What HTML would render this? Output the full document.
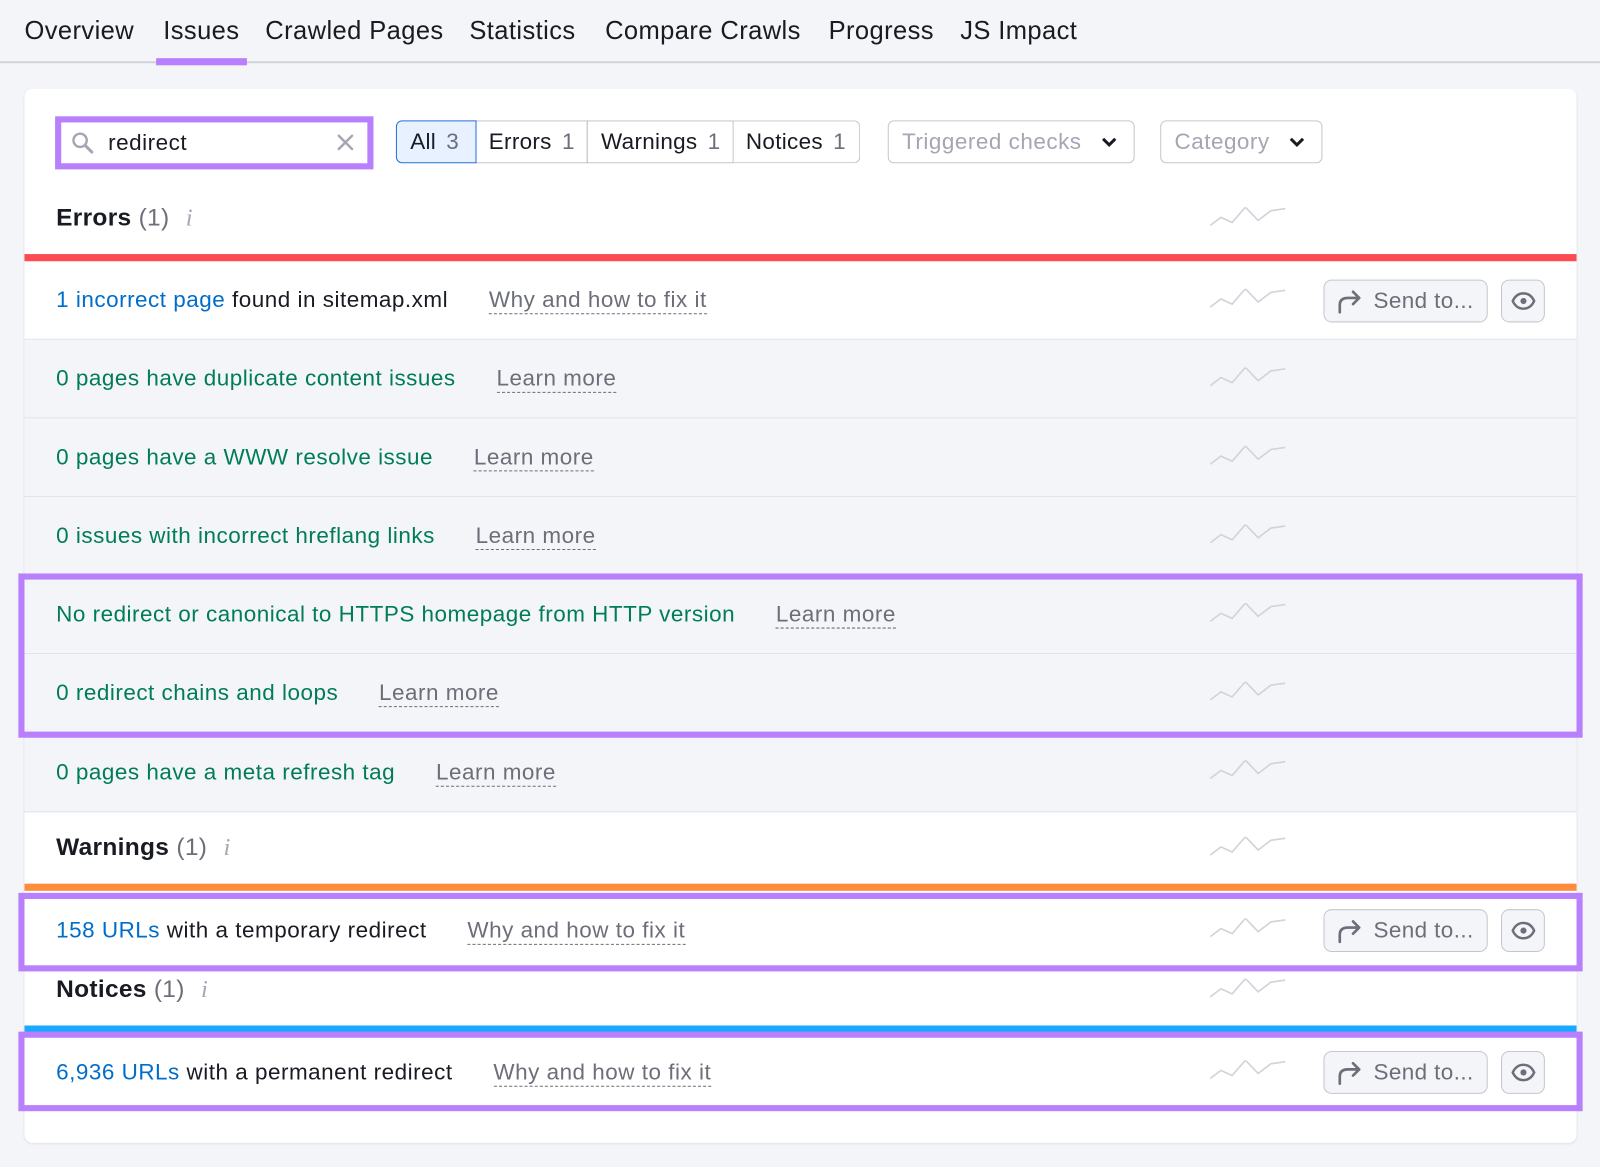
<!DOCTYPE html>
<html><head><meta charset="utf-8"><style>
*{box-sizing:border-box;margin:0;padding:0}
html,body{width:1600px;height:1167px;overflow:hidden;background:#f4f5f9;font-family:"Liberation Sans",sans-serif}
#w{position:absolute;left:0;top:0;width:1568px;height:1144px;transform:scale(1.0204);transform-origin:0 0}
.a{position:absolute}
.tab{position:absolute;top:16px;font-size:25px;letter-spacing:0.4px;color:#191b23;white-space:nowrap}
.row{position:absolute;left:24px;width:1521px;height:77px;border-bottom:1px solid #e0e1e9}
.g{background:#f4f5f9}
.t{position:absolute;left:31px;top:50%;transform:translateY(-50%);font-size:22px;letter-spacing:0.5px;white-space:nowrap;color:#191b23}
.gr{color:#007c58}
.bl{color:#006dca}
.lm{color:#6c6e79;border-bottom:1.5px dashed #6c6e79;margin-left:40px;padding-bottom:1px}
.hd{position:absolute;left:55px;font-size:24px;letter-spacing:0.3px;font-weight:bold;color:#191b23;white-space:nowrap}
.hd span{font-weight:normal;color:#6c6e79}
.hd i{font-family:"Liberation Serif",serif;color:#a4a6b3;margin-left:16px;font-weight:normal}
.sp{position:absolute;left:1186px}
.send{position:absolute;left:1273px;width:161px;height:42px;border:1px solid #c4c7cf;border-radius:8px;background:#f4f5f9;font-size:22px;letter-spacing:0.4px;color:#6c6e79;padding-left:48px;line-height:40px}
.send svg{position:absolute;left:12px;top:9px}
.eye{position:absolute;left:1447px;width:43px;height:42px;border:1px solid #c4c7cf;border-radius:8px;background:#f4f5f9}
.eye svg{position:absolute;left:9px;top:10px}
.hl{position:absolute;left:18px;width:1533px;border:6px solid #b880fc}
.seg{position:absolute;top:118px;height:42px;border:1px solid #c4c7cf;font-size:22px;letter-spacing:0.3px;color:#191b23;line-height:40px;padding-left:13px}
.seg b{font-weight:normal;color:#6c6e79;margin-left:10px}
.dd{position:absolute;top:118px;height:42px;border:1px solid #c4c7cf;border-radius:6px;background:#fff;font-size:22px;letter-spacing:0.5px;color:#a4a6b3;line-height:40px;padding-left:13px}
.dd svg{position:absolute;right:16px;top:15px}
</style></head><body><div id="w">
<div class="tab" style="left:24px">Overview</div>
<div class="tab" style="left:160px">Issues</div>
<div class="tab" style="left:260px">Crawled Pages</div>
<div class="tab" style="left:460px">Statistics</div>
<div class="tab" style="left:593px">Compare Crawls</div>
<div class="tab" style="left:812px">Progress</div>
<div class="tab" style="left:941px">JS Impact</div>
<div class="a" style="left:0;top:60px;width:1568px;height:2px;background:#d1d4db"></div>
<div class="a" style="left:153px;top:57px;width:89px;height:7px;background:#b880fc"></div>

<div class="a" style="left:24px;top:87px;width:1521px;height:1033px;background:#fff;border-radius:8px;box-shadow:0 1px 2px rgba(0,0,0,.08)"></div>

<div class="a" style="left:54px;top:114px;width:312px;height:52px;border:6px solid #b880fc;background:#fff"></div>
<svg class="a" style="left:69px;top:128px" width="24" height="24" viewBox="0 0 24 24"><circle cx="9.5" cy="9.5" r="6.5" fill="none" stroke="#a4a6b3" stroke-width="2.4"/><path d="M14.5 14.5 L21 21" stroke="#a4a6b3" stroke-width="3" stroke-linecap="round"/></svg>
<div class="a" style="left:106px;top:127px;font-size:22px;letter-spacing:0.5px;color:#191b23">redirect</div>
<svg class="a" style="left:330px;top:131px" width="17" height="17" viewBox="0 0 17 17"><path d="M2 2L15 15M15 2L2 15" stroke="#a4a6b3" stroke-width="2.4" stroke-linecap="round"/></svg>

<div class="seg" style="left:388px;width:79px;border-radius:6px 0 0 6px;background:#e7f1ff;border-color:#2a6fd6;z-index:2">All<b>3</b></div>
<div class="seg" style="left:466px;width:110px;border-left:none">Errors<b>1</b></div>
<div class="seg" style="left:575px;width:144px">Warnings<b>1</b></div>
<div class="seg" style="left:718px;width:125px;border-radius:0 6px 6px 0;border-left:none">Notices<b>1</b></div>
<div class="dd" style="left:870px;width:242px">Triggered checks<svg width="16" height="11" viewBox="0 0 16 11"><path d="M2 2L8 8L14 2" fill="none" stroke="#191b23" stroke-width="3"/></svg></div>
<div class="dd" style="left:1137px;width:159px">Category<svg width="16" height="11" viewBox="0 0 16 11"><path d="M2 2L8 8L14 2" fill="none" stroke="#191b23" stroke-width="3"/></svg></div>

<div class="hd" style="top:200px">Errors <span>(1)</span><i>i</i></div>
<div class="a" style="left:24px;top:249px;width:1521px;height:7px;background:#ff4953"></div>

<div class="row" style="top:256px"><div class="t"><span class="bl">1 incorrect page</span> found in sitemap.xml<span class="lm">Why and how to fix it</span></div></div>
<div class="row g" style="top:333px"><div class="t gr">0 pages have duplicate content issues<span class="lm">Learn more</span></div></div>
<div class="row g" style="top:410px"><div class="t gr">0 pages have a WWW resolve issue<span class="lm">Learn more</span></div></div>
<div class="row g" style="top:487px"><div class="t gr">0 issues with incorrect hreflang links<span class="lm">Learn more</span></div></div>
<div class="row g" style="top:564px"><div class="t gr">No redirect or canonical to HTTPS homepage from HTTP version<span class="lm">Learn more</span></div></div>
<div class="row g" style="top:641px"><div class="t gr">0 redirect chains and loops<span class="lm">Learn more</span></div></div>
<div class="row g" style="top:718px;height:78px"><div class="t gr">0 pages have a meta refresh tag<span class="lm">Learn more</span></div></div>

<div class="hd" style="top:817px">Warnings <span>(1)</span><i>i</i></div>
<div class="a" style="left:24px;top:866px;width:1521px;height:7px;background:#ff8c3a"></div>
<div class="row" style="top:873px;border:none"><div class="t"><span class="bl">158 URLs</span> with a temporary redirect<span class="lm">Why and how to fix it</span></div></div>

<div class="hd" style="top:956px">Notices <span>(1)</span><i>i</i></div>
<div class="a" style="left:24px;top:1005px;width:1521px;height:7px;background:#1aa9ff"></div>
<div class="row" style="top:1012px;border:none"><div class="t"><span class="bl">6,936 URLs</span> with a permanent redirect<span class="lm">Why and how to fix it</span></div></div>

<svg width="0" height="0" style="position:absolute"><defs><polyline id="spk" points="0,18 10.5,10 21.5,15 34.5,0 47,13 59.5,3.5 73.5,1.5" fill="none" stroke="#d1d3da" stroke-width="1.6"/></defs></svg>
<svg class="sp" style="top:203px" width="76" height="21"><use href="#spk"/></svg>
<svg class="sp" style="top:283px" width="76" height="21"><use href="#spk"/></svg>
<svg class="sp" style="top:360px" width="76" height="21"><use href="#spk"/></svg>
<svg class="sp" style="top:437px" width="76" height="21"><use href="#spk"/></svg>
<svg class="sp" style="top:514px" width="76" height="21"><use href="#spk"/></svg>
<svg class="sp" style="top:591px" width="76" height="21"><use href="#spk"/></svg>
<svg class="sp" style="top:668px" width="76" height="21"><use href="#spk"/></svg>
<svg class="sp" style="top:745px" width="76" height="21"><use href="#spk"/></svg>
<svg class="sp" style="top:820px" width="76" height="21"><use href="#spk"/></svg>
<svg class="sp" style="top:900px" width="76" height="21"><use href="#spk"/></svg>
<svg class="sp" style="top:959px" width="76" height="21"><use href="#spk"/></svg>
<svg class="sp" style="top:1039px" width="76" height="21"><use href="#spk"/></svg>

<div class="send" style="left:1297px;top:274px"><svg width="26" height="24" viewBox="0 0 26 24"><path d="M3 22V15C3 10 6 8 11 8H22M16 2L22 8L16 14" fill="none" stroke="#6c6e79" stroke-width="2.6" stroke-linecap="round" stroke-linejoin="round"/></svg>Send to...</div>
<div class="eye" style="left:1471px;top:274px"><svg width="24" height="20" viewBox="0 0 24 20"><path d="M1.5 10C4 4.5 8 2.5 12 2.5S20 4.5 22.5 10C20 15.5 16 17.5 12 17.5S4 15.5 1.5 10Z" fill="none" stroke="#6c6e79" stroke-width="2.4"/><circle cx="12" cy="10" r="3" fill="#6c6e79"/></svg></div>
<div class="send" style="left:1297px;top:891px"><svg width="26" height="24" viewBox="0 0 26 24"><path d="M3 22V15C3 10 6 8 11 8H22M16 2L22 8L16 14" fill="none" stroke="#6c6e79" stroke-width="2.6" stroke-linecap="round" stroke-linejoin="round"/></svg>Send to...</div>
<div class="eye" style="left:1471px;top:891px"><svg width="24" height="20" viewBox="0 0 24 20"><path d="M1.5 10C4 4.5 8 2.5 12 2.5S20 4.5 22.5 10C20 15.5 16 17.5 12 17.5S4 15.5 1.5 10Z" fill="none" stroke="#6c6e79" stroke-width="2.4"/><circle cx="12" cy="10" r="3" fill="#6c6e79"/></svg></div>
<div class="send" style="left:1297px;top:1030px"><svg width="26" height="24" viewBox="0 0 26 24"><path d="M3 22V15C3 10 6 8 11 8H22M16 2L22 8L16 14" fill="none" stroke="#6c6e79" stroke-width="2.6" stroke-linecap="round" stroke-linejoin="round"/></svg>Send to...</div>
<div class="eye" style="left:1471px;top:1030px"><svg width="24" height="20" viewBox="0 0 24 20"><path d="M1.5 10C4 4.5 8 2.5 12 2.5S20 4.5 22.5 10C20 15.5 16 17.5 12 17.5S4 15.5 1.5 10Z" fill="none" stroke="#6c6e79" stroke-width="2.4"/><circle cx="12" cy="10" r="3" fill="#6c6e79"/></svg></div>

<div class="hl" style="top:562px;height:161px"></div>
<div class="hl" style="top:875px;height:77px"></div>
<div class="hl" style="top:1011px;height:78px"></div>
</div></body></html>
